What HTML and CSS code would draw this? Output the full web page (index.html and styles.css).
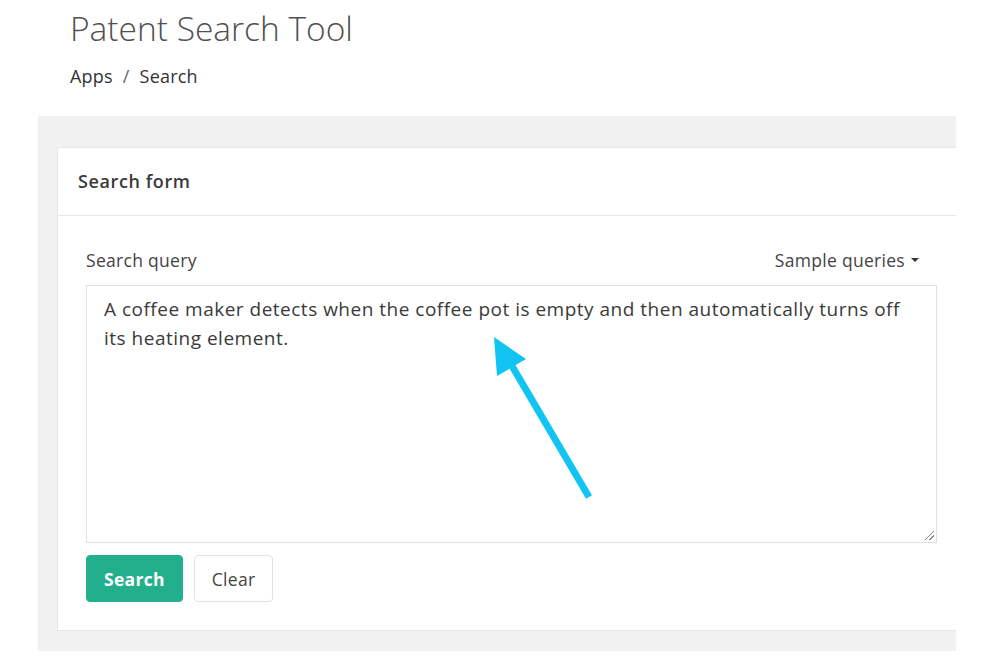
FILE: index.html
```html
<!DOCTYPE html>
<html>
    <head>
        <meta charset="utf-8">
        <title>Patent Search Tool</title>
        <link rel="stylesheet" href="styles.css">
    </head>
    <body>
        <div class="page-head">
            <h1 class="page-head__title">Patent Search Tool</h1>
            <div class="crumbs">
                <span>Apps</span>
                <span class="crumbs__sep">/</span>
                <span>Search</span>
            </div>
        </div>
        <div class="panel">
            <div class="card">
                <div class="card__head">Search form</div>
                <div class="card__body">
                    <div class="field-row">
                        <label class="field-label">Search query</label>
                        <span class="samples">Sample queries <span class="caret"></span></span>
                    </div>
                    <div class="query">A coffee maker detects when the coffee pot is empty and then automatically turns off its heating element.</div>
                    <div class="actions">
                        <button class="btn btn--primary">Search</button>
                        <button class="btn btn--plain">Clear</button>
                    </div>
                </div>
            </div>
        </div>
        <svg class="pointer" width="1000" height="669" viewBox="0 0 1000 669">
            <line x1="589" y1="497" x2="512" y2="366" stroke="#12c4f2" stroke-width="7" stroke-linecap="butt"/>
            <polygon points="494,337 526,359 497,376" fill="#12c4f2"/>
        </svg>
    </body>
</html>
```
FILE: styles.css
```css
:root {
    --font-main: 'Open Sans', 'Noto Sans', Arial, sans-serif;
    --color-text: #444;
    --color-panel: #f1f1f1;
    --color-line: #e6e6e6;
    --color-green: #22b08c;
}
body {
    margin: 0;
    font-family: var(--font-main);
    color: var(--color-text);
    background: #fff;
    width: 1000px;
    height: 669px;
    overflow: hidden;
    position: relative;
}
.page-head {
    padding: 6px 0 0 70px;
    height: 111px;
    box-sizing: border-box;
}
.page-head__title {
    margin: 0;
    font-size: 33.5px;
    font-weight: 300;
    color: #505050;
    line-height: 44px;
}
.crumbs {
    margin-top: 14px;
    font-size: 18px;
    letter-spacing: 0.2px;
    color: #333;
    display: flex;
    gap: 10px;
}
.crumbs__sep {
    color: #666;
}
.panel {
    margin: 5px 0 0 38px;
    width: 918px;
    background: var(--color-panel);
    padding: 31px 0 20px 19px;
    box-sizing: border-box;
}
.card {
    background: #fff;
    border: 1px solid var(--color-line);
    border-right: none;
}
.card__head {
    height: 67px;
    line-height: 67px;
    padding-left: 20px;
    font-size: 18px;
    letter-spacing: 0.6px;
    font-weight: 600;
    color: #3a3a3a;
    border-bottom: 1px solid var(--color-line);
}
.card__body {
    padding: 31px 19px 28px 28px;
}
.field-row {
    display: flex;
    justify-content: space-between;
    align-items: center;
    padding-right: 18px;
    font-size: 17.5px;
    letter-spacing: 0.3px;
    color: #444;
    height: 26px;
}
.samples {
    display: flex;
    align-items: center;
    gap: 6px;
}
.caret {
    width: 0;
    height: 0;
    border-left: 4px solid transparent;
    border-right: 4px solid transparent;
    border-top: 4px solid #333;
}
.query {
    position: relative;
    margin-top: 12px;
    height: 258px;
    box-sizing: border-box;
    border: 1px solid #e1e1e1;
    padding: 9px 28px 9px 17px;
    font-size: 19px;
    letter-spacing: 0.5px;
    line-height: 29px;
    color: #3a3a3a;
}
.query:after {
    content: '';
    position: absolute;
    right: 2px;
    bottom: 2px;
    width: 9px;
    height: 9px;
    background: linear-gradient(135deg, transparent 45%, #888 45%, #888 55%, transparent 55%, transparent 70%, #888 70%, #888 80%, transparent 80%);
}
.actions {
    display: flex;
    gap: 11px;
    margin-top: 12px;
}
.btn {
    font-family: var(--font-main);
    font-size: 17.5px;
    letter-spacing: 0.3px;
    height: 47px;
    border-radius: 4px;
    padding: 0 17px;
    cursor: pointer;
}
.btn--primary {
    background: var(--color-green);
    border: 1px solid var(--color-green);
    color: #fff;
    font-weight: 700;
}
.btn--plain {
    background: #fff;
    border: 1px solid #e3e3e3;
    color: #444;
}
.pointer {
    position: absolute;
    left: 0;
    top: 0;
    pointer-events: none;
}
```
